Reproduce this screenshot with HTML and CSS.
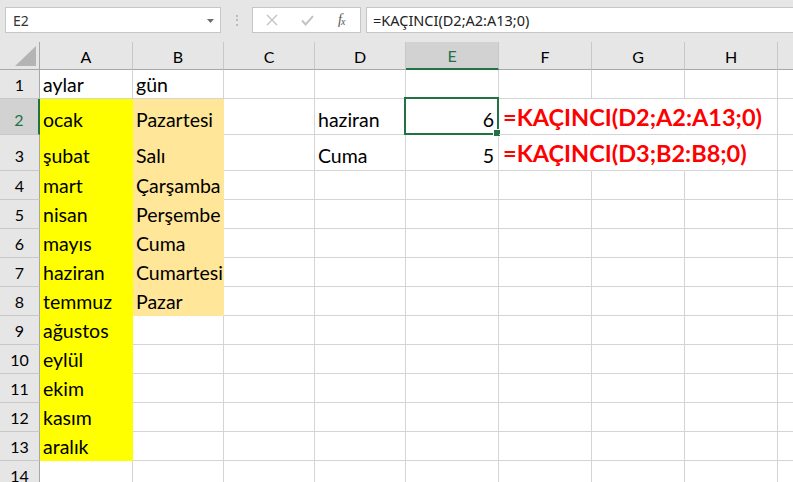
FILE: index.html
```html
<!DOCTYPE html>
<html lang="tr">
<head>
<meta charset="utf-8">
<title>Excel - KAÇINCI</title>
<link rel="stylesheet" href="styles.css">
</head>
<body>
<div class="app">
  <div class="toolbar">
    <div class="namebox">
      <span class="namebox-text">E2</span>
      <svg class="dd" width="7" height="4" viewBox="0 0 7 4"><polygon points="0,0 7,0 3.5,4" fill="#6d6d6d"/></svg>
    </div>
    <div class="dots"><span></span><span></span><span></span></div>
    <div class="fxbox">
      <svg class="ico" width="12" height="12" viewBox="0 0 12 12"><path d="M1 1 L11 11 M11 1 L1 11" stroke="#c3c3c3" stroke-width="1.4" fill="none"/></svg>
      <svg class="ico" width="13" height="11" viewBox="0 0 13 11"><path d="M1 5.5 L4.6 9.4 L12 1.2" stroke="#c3c3c3" stroke-width="2" fill="none"/></svg>
      <span class="fx">f<sub>x</sub></span>
    </div>
    <div class="formula">=KAÇINCI(D2;A2:A13;0)</div>
  </div>

  <div class="sheet">
    <!-- header -->
    <div class="h corner"><svg width="22" height="21" viewBox="0 0 22 21"><polygon points="21,0 21,20 0,20" fill="#b4b4b4"/></svg></div>
    <div class="h">A</div><div class="h">B</div><div class="h">C</div><div class="h">D</div>
    <div class="h sel">E</div><div class="h">F</div><div class="h">G</div><div class="h">H</div><div class="h last"></div>

    <!-- row 1 -->
    <div class="r">1</div>
    <div class="c">aylar</div><div class="c">gün</div><div class="c"></div><div class="c"></div><div class="c"></div><div class="c"></div><div class="c"></div><div class="c"></div><div class="c"></div>

    <!-- row 2 -->
    <div class="r rsel tall">2</div>
    <div class="c y tall">ocak</div><div class="c b tall">Pazartesi</div><div class="c tall"></div><div class="c tall">haziran</div>
    <div class="c num active tall">6</div><div class="c spill redcell"><span class="red">=KAÇINCI(D2;A2:A13;0)</span></div><div class="c spill"></div><div class="c"></div><div class="c"></div>

    <!-- row 3 -->
    <div class="r tall">3</div>
    <div class="c y tall">şubat</div><div class="c b tall">Salı</div><div class="c tall"></div><div class="c tall">Cuma</div>
    <div class="c num tall">5</div><div class="c spill redcell"><span class="red">=KAÇINCI(D3;B2:B8;0)</span></div><div class="c spill"></div><div class="c"></div><div class="c"></div>

    <!-- row 4 -->
    <div class="r">4</div>
    <div class="c y">mart</div><div class="c b">Çarşamba</div><div class="c"></div><div class="c"></div><div class="c"></div><div class="c"></div><div class="c"></div><div class="c"></div><div class="c"></div>

    <!-- row 5 -->
    <div class="r">5</div>
    <div class="c y">nisan</div><div class="c b">Perşembe</div><div class="c"></div><div class="c"></div><div class="c"></div><div class="c"></div><div class="c"></div><div class="c"></div><div class="c"></div>

    <!-- row 6 -->
    <div class="r">6</div>
    <div class="c y">mayıs</div><div class="c b">Cuma</div><div class="c"></div><div class="c"></div><div class="c"></div><div class="c"></div><div class="c"></div><div class="c"></div><div class="c"></div>

    <!-- row 7 -->
    <div class="r">7</div>
    <div class="c y">haziran</div><div class="c b">Cumartesi</div><div class="c"></div><div class="c"></div><div class="c"></div><div class="c"></div><div class="c"></div><div class="c"></div><div class="c"></div>

    <!-- row 8 -->
    <div class="r">8</div>
    <div class="c y">temmuz</div><div class="c b">Pazar</div><div class="c"></div><div class="c"></div><div class="c"></div><div class="c"></div><div class="c"></div><div class="c"></div><div class="c"></div>

    <!-- row 9 -->
    <div class="r">9</div>
    <div class="c y">ağustos</div><div class="c"></div><div class="c"></div><div class="c"></div><div class="c"></div><div class="c"></div><div class="c"></div><div class="c"></div><div class="c"></div>

    <!-- row 10 -->
    <div class="r">10</div>
    <div class="c y">eylül</div><div class="c"></div><div class="c"></div><div class="c"></div><div class="c"></div><div class="c"></div><div class="c"></div><div class="c"></div><div class="c"></div>

    <!-- row 11 -->
    <div class="r">11</div>
    <div class="c y">ekim</div><div class="c"></div><div class="c"></div><div class="c"></div><div class="c"></div><div class="c"></div><div class="c"></div><div class="c"></div><div class="c"></div>

    <!-- row 12 -->
    <div class="r">12</div>
    <div class="c y">kasım</div><div class="c"></div><div class="c"></div><div class="c"></div><div class="c"></div><div class="c"></div><div class="c"></div><div class="c"></div><div class="c"></div>

    <!-- row 13 -->
    <div class="r">13</div>
    <div class="c y">aralık</div><div class="c"></div><div class="c"></div><div class="c"></div><div class="c"></div><div class="c"></div><div class="c"></div><div class="c"></div><div class="c"></div>

    <!-- row 14 -->
    <div class="r">14</div>
    <div class="c"></div><div class="c"></div><div class="c"></div><div class="c"></div><div class="c"></div><div class="c"></div><div class="c"></div><div class="c"></div><div class="c"></div>
  </div>
</div>
</body>
</html>
```

FILE: styles.css
```css
* { box-sizing: border-box; }
html, body { margin: 0; padding: 0; }
body {
  width: 793px;
  height: 482px;
  overflow: hidden;
  background: #ffffff;
  font-family: Lato, "Liberation Sans", sans-serif;
}
.app { width: 793px; height: 482px; overflow: hidden; }

/* toolbar / formula bar */
.toolbar {
  height: 42px;
  background: #e6e6e6;
  display: flex;
  align-items: flex-start;
  padding: 7px 0 0 5px;
}
.namebox {
  width: 216px;
  height: 26px;
  background: #fff;
  border: 1px solid #c6c6c6;
  display: flex;
  align-items: center;
  justify-content: space-between;
  padding: 0 6px 0 7px;
}
.namebox-text {
  font-family: "Noto Sans", "Open Sans", sans-serif;
  font-size: 14px;
  color: #333;
}
.dd { margin-top: 1px; }
.dots {
  width: 31px;
  height: 26px;
  display: flex;
  flex-direction: column;
  align-items: center;
  justify-content: center;
  gap: 2.5px;
}
.dots span { width: 2px; height: 2px; background: #bcbcbc; display: block; }
.fxbox {
  width: 109px;
  height: 26px;
  background: #fff;
  border: 1px solid #c6c6c6;
  display: flex;
  align-items: center;
  padding-left: 13px;
  gap: 23px;
}
.fxbox .ico { display: block; }
.fx {
  font-family: "Liberation Serif", "DejaVu Serif", serif;
  font-style: italic;
  font-size: 14px;
  color: #555;
  margin-left: 1px;
  letter-spacing: -1px;
}
.fx sub { font-size: 10px; vertical-align: -1px; }
.formula {
  margin-left: 5px;
  flex: 1;
  height: 26px;
  background: #fff;
  border: 1px solid #c6c6c6;
  border-right: none;
  display: flex;
  align-items: center;
  padding-left: 6px;
  font-family: "Noto Sans", "Open Sans", sans-serif;
  font-size: 14.5px;
  color: #222;
  white-space: nowrap;
}

/* sheet grid */
.sheet {
  display: grid;
  grid-template-columns: 40px 93px 91px 91px 91px 93px 93px 93px 93px 16px;
  grid-template-rows: 28px 29px 36px 36px repeat(11, 29px);
}
.h {
  background: #e6e6e6;
  border-right: 1px solid #c8c8c8;
  border-bottom: 1px solid #a8a8a8;
  display: flex;
  align-items: center;
  justify-content: center;
  font-size: 16px;
  color: #000;
  padding-top: 1px;
}
.h.corner {
  border-right: 1px solid #a8a8a8;
  justify-content: flex-end;
  align-items: flex-end;
  padding: 0 2px 2px 0;
}
.h.corner svg { display: block; }
.h.sel {
  background: #d2d2d2;
  color: #217346;
  border-bottom: 2px solid #217346;
}
.h.last { border-right: none; }

.r {
  background: #e6e6e6;
  border-right: 1px solid #a8a8a8;
  border-bottom: 1px solid #c8c8c8;
  display: flex;
  align-items: flex-end;
  justify-content: center;
  font-size: 16px;
  line-height: 20px;
  padding-bottom: 3px;
  color: #000;
}
.r.tall { padding-bottom: 4px; }
.r.rsel {
  background: #d2d2d2;
  color: #217346;
  border-right: 2px solid #217346;
}

.c {
  position: relative;
  border-right: 1px solid #d4d4d4;
  border-bottom: 1px solid #d4d4d4;
  display: flex;
  align-items: flex-end;
  padding: 0 3px 3px 3px;
  font-size: 19.5px;
  line-height: 20px;
  color: #000;
  white-space: nowrap;
}
.c.tall { padding-bottom: 4px; }
.c.y { background: #ffff00; border-color: #ffff00; }
.c.b { background: #ffe699; border-color: #ffe699; }
.c.num { justify-content: flex-end; padding-right: 4px; }
.c.spill { border-right-color: #ffffff; overflow: visible; }
.c.redcell { padding-left: 4px; padding-bottom: 5px; z-index: 5; }
.red {
  color: #ff0000;
  font-weight: 700;
  font-size: 23.5px;
  line-height: 23px;
}
.c.active::before {
  content: "";
  position: absolute;
  top: -2px;
  left: -2px;
  right: -1px;
  bottom: -1px;
  border: 2px solid #217346;
  pointer-events: none;
  z-index: 3;
}
.c.active::after {
  content: "";
  position: absolute;
  right: -3px;
  bottom: -3px;
  width: 6px;
  height: 6px;
  background: #217346;
  border: 1px solid #ffffff;
  z-index: 4;
}
```
